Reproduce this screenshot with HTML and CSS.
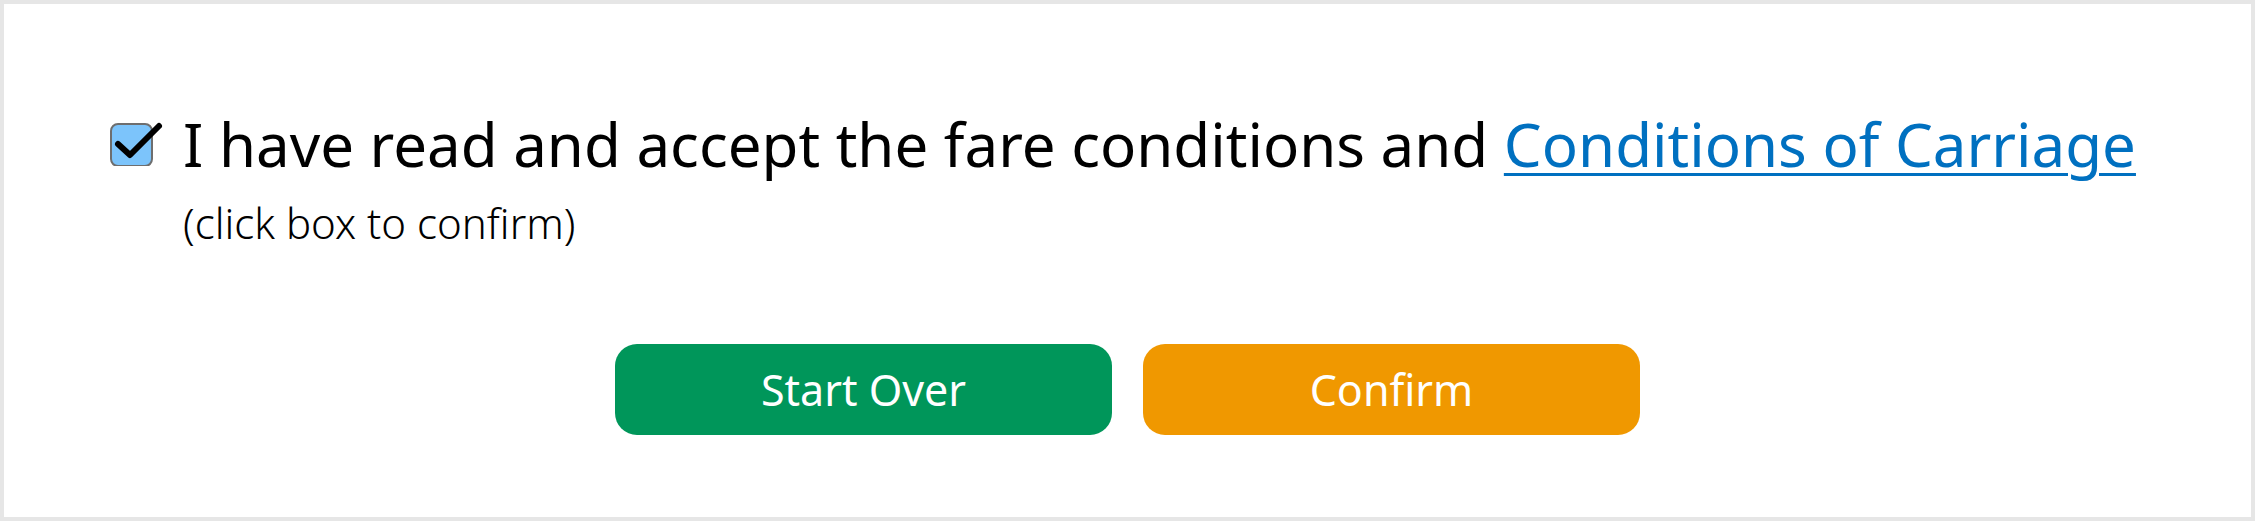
FILE: index.html
```html
<!DOCTYPE html>
<html lang="en">
<head>
<meta charset="utf-8">
<title>Confirm</title>
<link rel="stylesheet" href="styles.css">
</head>
<body>
<div class="frame">
  <div class="consent">
    <div class="check">
      <svg width="54" height="46" viewBox="0 0 54 46">
        <rect x="1" y="4" width="41" height="42" rx="7" ry="7" fill="#7cc4fb" stroke="#6e6e6e" stroke-width="2"/>
        <path d="M8 24 L20 35 L49 6" fill="none" stroke="#000" stroke-width="6" stroke-linecap="round" stroke-linejoin="round"/>
      </svg>
    </div>
    <div class="texts">
      <p class="main">I have read and accept the fare conditions and <a href="#" class="link">Conditions of Carriage</a></p>
      <p class="hint">(click box to confirm)</p>
    </div>
  </div>
  <div class="actions">
    <button class="btn btn-green">Start Over</button>
    <button class="btn btn-orange">Confirm</button>
  </div>
</div>
</body>
</html>
```
FILE: styles.css
```css
html, body {
  margin: 0;
  padding: 0;
  background: #ffffff;
}
.frame {
  box-sizing: border-box;
  width: 2255px;
  height: 521px;
  border: 4px solid #e6e6e6;
  background: #ffffff;
  font-family: "Noto Sans", "Open Sans", sans-serif;
  padding-top: 110px;
}
.consent {
  display: flex;
  align-items: flex-start;
  padding-left: 106px;
}
.check {
  width: 73px;
  flex: none;
  padding-top: 6px;
}
.check svg {
  display: block;
}
.texts {
  display: flex;
  flex-direction: column;
}
.main {
  margin: 0;
  font-size: 60px;
  line-height: 60px;
  color: #000;
  font-weight: 400;
}
.link {
  color: #0070c0;
  text-decoration: underline;
  text-decoration-thickness: 3px;
  text-underline-offset: 6px;
}
.hint {
  margin: 25px 0 0 0;
  font-size: 42px;
  line-height: 48px;
  font-weight: 300;
  color: #000;
}
.actions {
  display: flex;
  justify-content: center;
  gap: 31px;
  margin-top: 97px;
}
.btn {
  width: 497px;
  height: 91px;
  border: none;
  border-radius: 22px;
  color: #fff;
  font-family: "Noto Sans", "Open Sans", sans-serif;
  font-size: 43px;
  font-weight: 400;
  padding: 0;
}
.btn-green {
  background: #00965a;
}
.btn-orange {
  background: #f09800;
}
```
